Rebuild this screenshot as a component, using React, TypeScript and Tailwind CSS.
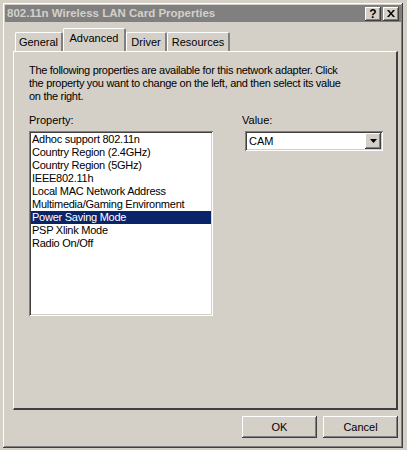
const raised =
  "shadow-[inset_-1px_-1px_#404040,inset_1px_1px_#ffffff,inset_-2px_-2px_#808080,inset_2px_2px_#d4d0c8]";
const sunken =
  "shadow-[inset_1px_1px_#808080,inset_-1px_-1px_#ffffff,inset_2px_2px_#404040,inset_-2px_-2px_#d4d0c8]";

const properties = [
  "Adhoc support 802.11n",
  "Country Region (2.4GHz)",
  "Country Region (5GHz)",
  "IEEE802.11h",
  "Local MAC Network Address",
  "Multimedia/Gaming Environment",
  "Power Saving Mode",
  "PSP Xlink Mode",
  "Radio On/Off",
];

function Tab({ label, active, width }: { label: string; active?: boolean; width: string }) {
  return (
    <div
      className={`${width} ${
        active ? "h-[23px] -mb-px z-10 bg-[#d4d0c8]" : "h-[19px] mt-[4px]"
      } relative border-t border-l border-white border-r-2 border-r-[#808080] rounded-t-[2px] flex items-center justify-center`}
    >
      <span className={active ? "-mt-[3px]" : ""}>{label}</span>
    </div>
  );
}

function TitleButton({ children }: { children: React.ReactNode }) {
  return (
    <div className={`w-[16px] h-[14px] bg-[#d4d0c8] ${raised} flex items-center justify-center text-black`}>
      {children}
    </div>
  );
}

export default function App() {
  return (
    <div
      className="w-[407px] h-[450px] bg-[#d4d0c8] overflow-hidden text-[11px] leading-[13px] text-black"
      style={{ fontFamily: '"Liberation Sans", Arial, sans-serif' }}
    >
      <div className={`ml-[3px] mt-[3px] w-[400px] h-[445px] bg-[#d4d0c8] ${raised} p-[2px] flex flex-col`}>
        {/* Title bar */}
        <div className="h-[17px] bg-[#808080] flex items-center pl-[2px] pr-[2px]">
          <span className="font-bold text-[#d4d0c8] text-[11.5px] flex-1">
            802.11n Wireless LAN Card Properties
          </span>
          <div className="flex gap-[2px]">
            <TitleButton>
              <span className="font-bold text-[12px] leading-none">?</span>
            </TitleButton>
            <TitleButton>
              <svg width="8" height="7" viewBox="0 0 8 7">
                <path d="M0 0h2l2 2.5L6 0h2L5 3.5 8 7H6L4 4.5 2 7H0l3-3.5z" fill="#000" />
              </svg>
            </TitleButton>
          </div>
        </div>

        {/* Tabs */}
        <div className="mt-[6px] pl-[8px] pr-[3px] flex flex-col">
          <div className="flex pl-[2px] items-start h-[23px]">
            <Tab label="General" width="w-[48px]" />
            <Tab label="Advanced" width="w-[63px]" active />
            <Tab label="Driver" width="w-[41px]" />
            <Tab label="Resources" width="w-[63px]" />
          </div>
          <div className="h-[359px] border-t border-l border-white border-r-2 border-r-[#404040] border-b-2 border-b-[#404040] pl-[15px] pt-[12px]">
            <p className="whitespace-nowrap tracking-[-0.3px]">
              The following properties are available for this network adapter. Click
              <br />
              the property you want to change on the left, and then select its value
              <br />
              on the right.
            </p>
            <div className="flex mt-[11px]">
              <div className="flex flex-col">
                <span>Property:</span>
                <div className={`mt-[4px] w-[184px] h-[185px] bg-white ${sunken} p-[2px] flex flex-col`}>
                  {properties.map((p) => (
                    <div
                      key={p}
                      className={`h-[13px] pl-[1px] tracking-[-0.25px] ${
                        p === "Power Saving Mode" ? "bg-[#0a246a] text-white" : ""
                      }`}
                    >
                      {p}
                    </div>
                  ))}
                </div>
              </div>
              <div className="flex flex-col ml-[29px]">
                <span>Value:</span>
                <div className={`mt-[4px] ml-[3px] w-[138px] h-[20px] bg-white ${sunken} p-[2px] flex items-center`}>
                  <span className="flex-1 pl-[2px]">CAM</span>
                  <div className={`w-[16px] h-[16px] bg-[#d4d0c8] ${raised} flex items-center justify-center`}>
                    <svg width="7" height="4" viewBox="0 0 7 4">
                      <path d="M0 0h7L3.5 4z" fill="#000" />
                    </svg>
                  </div>
                </div>
              </div>
            </div>
          </div>
        </div>

        {/* Buttons */}
        <div className="mt-[6px] flex justify-end gap-[6px] pr-[3px]">
          <button className={`w-[75px] h-[22px] bg-[#d4d0c8] ${raised}`}>OK</button>
          <button className={`w-[75px] h-[22px] bg-[#d4d0c8] ${raised}`}>Cancel</button>
        </div>
      </div>
    </div>
  );
}
